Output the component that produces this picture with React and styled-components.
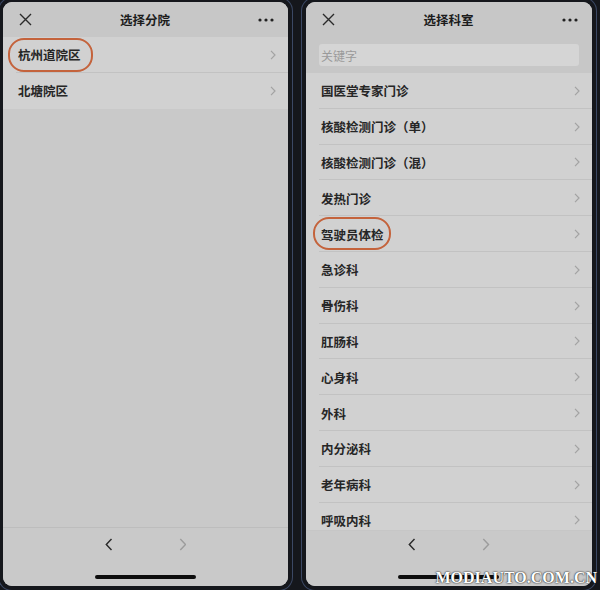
import React from 'react';
import styled, { createGlobalStyle } from 'styled-components';

const GlobalStyle = createGlobalStyle`
  html, body {
    margin: 0;
    padding: 0;
    background: #15171c;
  }
  body {
    font-family: "Noto Sans CJK SC", "Noto Sans", sans-serif;
  }
`;

const Page = styled.div`
  width: 600px;
  height: 590px;
  display: flex;
  gap: 18px;
  padding: 2px 8px 0 3px;
  box-sizing: border-box;
  position: relative;
  overflow: hidden;
  background: #15171c;
`;

const Screen = styled.div`
  position: relative;
  width: ${p => p.w}px;
  height: 584px;
  display: flex;
  flex-direction: column;
  background: #c9c9c9;
  border-radius: 9px;
  overflow: hidden;
  box-shadow: 0 0 0 4px #15171c, 0 0 0 5px #3b4864;
  flex-shrink: 0;
`;

const Header = styled.div`
  height: 35px;
  display: flex;
  align-items: center;
  justify-content: space-between;
  padding: 0 14px 0 15px;
  background: #c7c7c7;
  flex-shrink: 0;
`;

const Title = styled.div`
  font-size: 12.5px;
  font-weight: 700;
  color: #1c1c1c;
`;

const IconBtn = styled.div`
  width: 14px;
  height: 14px;
  display: flex;
  align-items: center;
  justify-content: center;
`;

const SearchBar = styled.div`
  height: 36px;
  padding: 7px 13px 7px 13px;
  box-sizing: border-box;
  background: #c7c7c7;
  flex-shrink: 0;
`;

const SearchInput = styled.div`
  height: 22px;
  border-radius: 3px;
  background: #d5d5d5;
  display: flex;
  align-items: center;
  padding-left: 2px;
  font-size: 12px;
  color: #9a9a9a;
`;

const List = styled.div`
  flex: 1;
  overflow: hidden;
  display: flex;
  flex-direction: column;
`;

const Row = styled.div`
  position: relative;
  height: 35.8px;
  flex-shrink: 0;
  display: flex;
  align-items: center;
  justify-content: space-between;
  padding: 0 12px 0 15px;
  background: #d1d1d1;
  font-size: 12.5px;
  font-weight: 700;
  color: #262626;
  &:not(:last-child)::after {
    content: '';
    position: absolute;
    left: 13px;
    right: 0;
    bottom: 0;
    height: 1px;
    background: #c2c2c2;
  }
`;

const Mark = styled.div`
  position: absolute;
  left: ${p => p.l}px;
  top: ${p => p.t}px;
  width: ${p => p.w}px;
  height: ${p => p.h}px;
  border: 2.5px solid #c4633c;
  border-radius: 16px;
  box-sizing: border-box;
  pointer-events: none;
`;

const Toolbar = styled.div`
  height: ${p => (p.flat ? 56 : 59)}px;
  flex-shrink: 0;
  position: relative;
  background: #c9c9c9;
  border-top: 1px solid ${p => (p.flat ? '#c6c6c6' : '#bdbdbd')};
  box-sizing: border-box;
  display: flex;
  justify-content: center;
  gap: 66px;
  padding-top: ${p => (p.flat ? 7 : 10)}px;
`;

const HomeBar = styled.div`
  position: absolute;
  left: 50%;
  bottom: 7px;
  width: 101px;
  height: 4px;
  margin-left: -51px;
  border-radius: 2px;
  background: #0d0d0d;
`;

const Watermark = styled.div`
  position: absolute;
  right: 3px;
  bottom: 3px;
  font-family: "Liberation Serif", "DejaVu Serif", serif;
  font-weight: 700;
  font-size: 16px;
  color: #ffffff;
  text-shadow: 0 0 2px #222, 0 0 1px #222;
`;

const Close = () => (
  <IconBtn>
    <svg width="13" height="13" viewBox="0 0 13 13">
      <path d="M1 1 L12 12 M12 1 L1 12" stroke="#2a2a2a" strokeWidth="1.4" />
    </svg>
  </IconBtn>
);

const More = () => (
  <svg width="16" height="4" viewBox="0 0 16 4">
    <circle cx="2" cy="2" r="1.6" fill="#222" />
    <circle cx="8" cy="2" r="1.6" fill="#222" />
    <circle cx="14" cy="2" r="1.6" fill="#222" />
  </svg>
);

const Chevron = ({ color = '#a3a3a3', size = 10, dir = 'right', sw = 1.2 }) => (
  <svg width={size * 0.6} height={size} viewBox="0 0 6 10">
    <path
      d={dir === 'right' ? 'M1 0.8 L5 5 L1 9.2' : 'M5 0.8 L1 5 L5 9.2'}
      fill="none"
      stroke={color}
      strokeWidth={sw}
    />
  </svg>
);

const NavArrows = () => (
  <>
    <Chevron dir="left" color="#2a2a2a" size={13} sw={1.1} />
    <Chevron dir="right" color="#9c9c9c" size={13} sw={1.1} />
  </>
);

const depts = [
  '国医堂专家门诊',
  '核酸检测门诊（单）',
  '核酸检测门诊（混）',
  '发热门诊',
  '驾驶员体检',
  '急诊科',
  '骨伤科',
  '肛肠科',
  '心身科',
  '外科',
  '内分泌科',
  '老年病科',
  '呼吸内科',
];

export default function App() {
  return (
    <>
      <GlobalStyle />
      <Page>
        <Screen w={285}>
          <Header>
            <Close />
            <Title>选择分院</Title>
            <More />
          </Header>
          <List>
            <Row>
              杭州道院区
              <Chevron />
              <Mark l={5} t={1} w={85} h={34} />
            </Row>
            <Row>
              北塘院区
              <Chevron />
            </Row>
          </List>
          <Toolbar>
            <NavArrows />
            <HomeBar />
          </Toolbar>
        </Screen>

        <Screen w={286}>
          <Header>
            <Close />
            <Title>选择科室</Title>
            <More />
          </Header>
          <SearchBar>
            <SearchInput>关键字</SearchInput>
          </SearchBar>
          <List>
            {depts.map(d => (
              <Row key={d}>
                {d}
                <Chevron />
                {d === '驾驶员体检' && <Mark l={7} t={1} w={78} h={33} />}
              </Row>
            ))}
          </List>
          <Toolbar flat>
            <NavArrows />
            <HomeBar />
          </Toolbar>
        </Screen>
        <Watermark>MODIAUTO.COM.CN</Watermark>
      </Page>
    </>
  );
}
